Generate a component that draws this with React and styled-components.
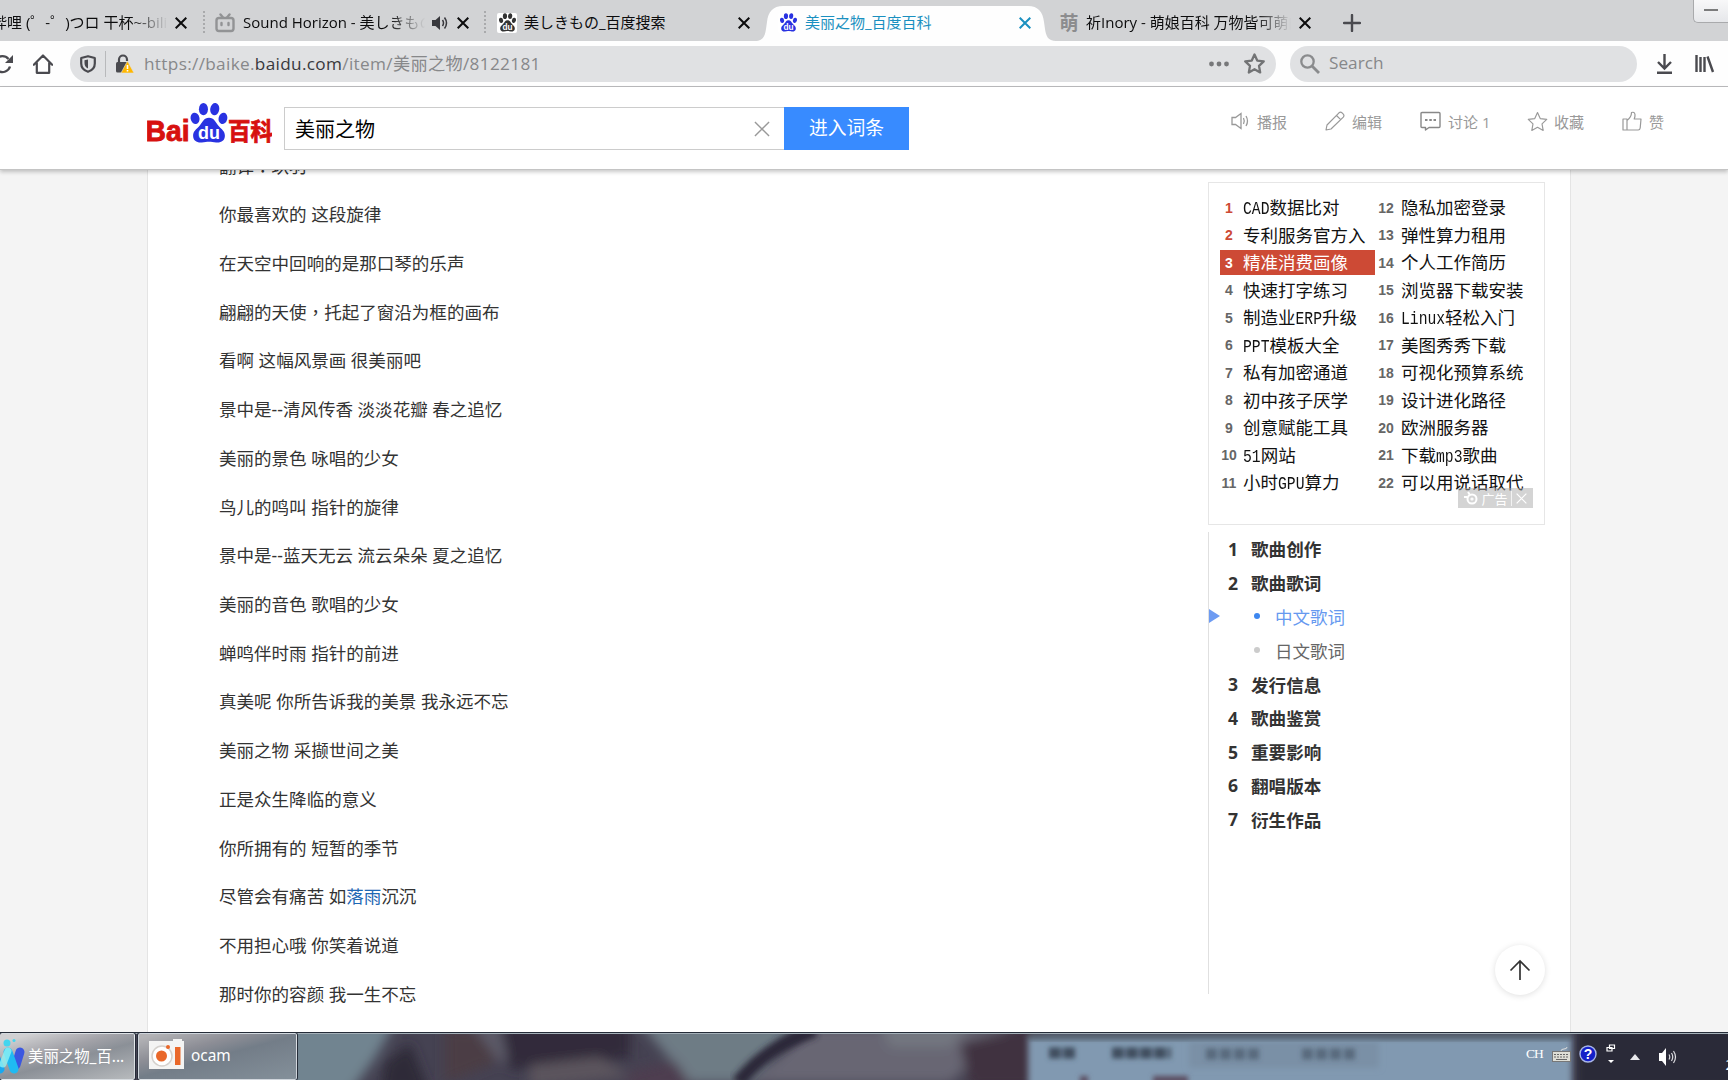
import React from 'react';
import styled, { createGlobalStyle } from 'styled-components';

const GlobalStyle = createGlobalStyle`
* {
box-sizing: border-box;
}
body {
margin: 0;
background: #fff;
font-family: "Open Sans", "Noto Sans CJK SC", sans-serif;
overflow: hidden;
}
`

const Screen = styled.div`
width: 1728px;
height: 1080px;
display: flex;
flex-direction: column;
overflow: hidden;
`

// browser chrome
const TabStrip = styled.div`
display: flex;
flex: none;
height: 41px;
background: #d2d3d5;
`
const Tab = styled.div`
position: relative;
display: flex;
align-items: center;
flex: none;
width: ${props => props.$w}px;
height: 41px;
padding: 4px ${props => props.$right}px 0 ${props => props.$left}px;
color: ${props => props.$active ? '#1a90c0' : '#0c0c0d'};
`
const TabShape = styled.svg`
position: absolute;
left: 0;
top: 6px;
`
const Favicon = styled.span`
position: relative;
display: flex;
align-items: center;
justify-content: center;
flex: none;
width: 20px;
height: 20px;
margin-right: ${props => props.$gap || 7}px;
border-radius: 2px;
background: ${props => props.$plain ? 'none' : '#fff'};
color: #8c8c8e;
font-size: 19px;
font-weight: bold;
line-height: 20px;
`
const TabTitle = styled.span`
position: relative;
flex: 1;
min-width: 0;
margin-top: -2px;
overflow: hidden;
white-space: pre;
font-family: "Open Sans", "Noto Sans CJK JP", sans-serif;
font-size: 15px;
line-height: 24px;
text-indent: ${props => props.$indent || 0}px;
${props => props.$fade && `
mask-image: linear-gradient(to right, #000 calc(100% - 36px), transparent);
`}
`
const Divider = styled.span`
flex: none;
width: 0;
height: 22px;
margin-top: 11px;
border-left: 2px dotted #a9aaac;
margin-right: -2px;
`
const NewTab = styled.div`
display: flex;
align-items: center;
flex: 1;
padding: 5px 0 0 23px;
`
const MinimizeButton = styled.div`
display: flex;
align-items: center;
justify-content: center;
width: 35px;
height: 23px;
border: 1px solid #a9aaac;
border-top: none;
border-right: none;
border-radius: 0 0 0 5px;
background: linear-gradient(#f8f8f9, #e6e7ea);
`
const Toolbar = styled.div`
display: flex;
align-items: center;
flex: none;
height: 46px;
background: #fefefe;
border-bottom: 1px solid #bcbcbe;
`
const NavIcons = styled.div`
display: flex;
align-items: center;
width: 70px;
overflow: hidden;
`
const Field = styled.div`
display: flex;
align-items: center;
width: ${props => props.$w}px;
height: 36px;
margin-right: ${props => props.$gap}px;
padding: 0 11px 0 10px;
border-radius: 18px;
background: #e0e1e3;
`
const FieldLine = styled.span`
width: 1px;
height: 26px;
margin: 0 9px;
background: #b8b9bb;
`
const Address = styled.span`
flex: 1;
margin: -2px 0 0 9px;
color: #87888a;
font-size: 17.2px;
letter-spacing: ${props => props.$spacing || 0}px;
white-space: nowrap;
`
const Domain = styled.span`
color: #38383d;
`

// page header
const Header = styled.header`
position: relative;
z-index: 2;
display: flex;
flex: none;
height: 83px;
padding-left: 147px;
background: #fff;
border-bottom: 1px solid #c4c4c4;
box-shadow: 0 2px 4px rgba(0, 0, 0, 0.22);
`
const Logo = styled.svg`
flex: none;
width: 125px;
height: 42px;
margin: 15px 12px 0 0;
`
const SearchInput = styled.div`
display: flex;
align-items: center;
justify-content: space-between;
width: 500px;
height: 43px;
margin-top: 20px;
padding: 0 14px 0 10px;
border: 1px solid #ccc;
border-right: none;
color: #000;
font-size: 20px;
`
const SearchButton = styled.button`
width: 125px;
height: 43px;
margin-top: 20px;
padding: 0 0 4px;
border: none;
background: #388bff;
color: #fff;
font-family: inherit;
font-size: 18.8px;
`
const Actions = styled.div`
display: flex;
margin: 20px 0 0 321px;
height: 28px;
`
const Action = styled.div`
display: flex;
align-items: center;
width: ${props => props.$w}px;
color: #999;
font-size: 15px;
white-space: nowrap;

svg {
flex: none;
margin-right: ${props => props.$gap}px;
}
`

// article
const Page = styled.main`
display: flex;
flex: 1;
min-height: 0;
padding-left: 147px;
background: #f4f4f4;
overflow: hidden;
`
const Sheet = styled.div`
display: flex;
width: 1424px;
background: #fff;
border-left: 1px solid #e4e4e4;
border-right: 1px solid #e4e4e4;
`
const Lyrics = styled.div`
width: 1060px;
margin-top: -28.5px;
padding-left: 71px;
`
const Line = styled.p`
margin: 0;
height: 48.72px;
color: #333;
font-family: "Noto Sans", "Noto Sans CJK SC", sans-serif;
font-size: 17.55px;
line-height: 48.72px;
white-space: nowrap;
`
// traditional glyphs keep the mark in the middle of its cell
const Mark = styled.span`
font-family: "Noto Sans CJK TC", sans-serif;
line-height: 1;
`
const TextLink = styled.a`
color: #1f68b4;
`
const Side = styled.aside`
position: relative;
width: 338px;
padding-top: 12px;
`
const AdBox = styled.div`
position: relative;
display: flex;
width: 337px;
height: 343px;
padding: 12px 0 0 11px;
border: 1px solid #e6e6e6;
`
const AdColumn = styled.div`
width: ${props => props.$w}px;
`
const AdRow = styled.div`
display: flex;
align-items: center;
height: 25px;
margin-bottom: 2.5px;
background: ${props => props.$hot ? '#cd4a35' : 'none'};
color: ${props => props.$hot ? '#fff' : '#111'};
font-family: "Noto Sans CJK SC", sans-serif;
font-size: 17.5px;
white-space: nowrap;
`
const AdNumber = styled.b`
width: ${props => props.$w}px;
margin-right: ${props => props.$gap}px;
color: ${props => props.$color};
font-family: "Liberation Sans", sans-serif;
font-size: 14px;
text-align: center;
`
const AdTitle = styled.span`
margin-top: -2px;
`
const Latin = styled.span`
display: inline-block;
font-family: "Liberation Mono", monospace;
font-size: 14.7px;
line-height: 17px;
transform: scaleY(1.22);
transform-origin: 50% 75%;
`
const AdBadge = styled.div`
position: absolute;
right: 11px;
bottom: 16px;
display: flex;
align-items: center;
justify-content: space-around;
width: 75px;
height: 20px;
padding: 0 4px;
background: rgba(170, 170, 170, 0.5);
color: #fff;
font-size: 13px;
`
const BadgeLine = styled.span`
width: 1px;
height: 15px;
background: rgba(255, 255, 255, 0.7);
`
const Catalog = styled.div`
height: 462px;
margin-top: 8px;
border-left: 1px solid #e0e0e0;
`
const Chapter = styled.div`
display: flex;
align-items: center;
height: 33.8px;
margin-top: ${props => props.$shift || 0}px;
color: #333;
font-family: "Noto Sans", "Noto Sans CJK SC", sans-serif;
font-size: 17.6px;
font-weight: bold;
`
const ChapterNumber = styled.span`
width: 42px;
padding-left: 19px;
`
const SubChapter = styled.div`
display: flex;
align-items: center;
height: 33.8px;
color: ${props => props.$active ? '#6699f0' : '#666'};
font-family: "Noto Sans CJK SC", sans-serif;
font-size: 17.5px;

&::before {
content: '';
width: 0;
height: 0;
border: 7px solid transparent;
border-left: 11px solid ${props => props.$active ? '#6d9bf2' : 'transparent'};
border-right: none;
}
`
const Bullet = styled.i`
width: 6px;
height: 6px;
margin: 0 15px 0 34px;
border-radius: 50%;
background: ${props => props.$active ? '#3d87f0' : '#ccc'};
`
const BackToTop = styled.div`
position: absolute;
left: 287px;
bottom: 37px;
display: flex;
align-items: center;
justify-content: center;
width: 50px;
height: 50px;
border-radius: 50%;
background: #fff;
box-shadow: 0 1px 6px rgba(0, 0, 0, 0.13);
`

// desktop taskbar
const Taskbar = styled.footer`
position: relative;
display: flex;
flex: none;
height: 48px;
border-top: 1px solid #252c38;
background: #3b3a4a;
overflow: hidden;
`
const Wallpaper = styled.svg`
position: absolute;
left: 0;
top: 0;
`
const TaskButton = styled.div`
position: relative;
display: flex;
align-items: center;
flex: none;
width: ${props => props.$w}px;
height: 47px;
margin-right: 3px;
padding-left: ${props => props.$left}px;
border: 1px solid rgba(235, 240, 245, 0.75);
border-left-width: ${props => props.$first ? 0 : 1}px;
border-radius: 2px;
outline: 1px solid #252c38;
background: ${props => props.$first
    ? 'linear-gradient(165deg, #d0d0d2 10%, #a2a2a8 38%, #8b9097 55%, #b7babd)'
    : 'linear-gradient(165deg, #b3b3b6 5%, #8d8e96 32%, #737d88 50%, #84909a)'};
color: #fff;
font-family: "Noto Sans", "Noto Sans CJK SC", sans-serif;
font-size: 15.4px;
white-space: nowrap;

svg {
flex: none;
}
`
const TaskLabel = styled.span`
margin-top: -3px;
`
const Tray = styled.div`
position: relative;
display: flex;
align-items: center;
margin-left: auto;
width: 202px;
color: #fff;
`
const Lang = styled.span`
width: 26px;
margin-top: -5px;
font-family: "Liberation Serif", serif;
font-size: 13.5px;
letter-spacing: -1px;
`
const Clock = styled.span`
margin: 14px -6px 0 auto;
font-size: 15px;
`

const CloseIcon = ({ color = '#0c0c0d', size = 12, width = 2 }) => (
    <svg width={size} height={size} viewBox="0 0 12 12" style={{ position: 'relative', flex: 'none' }}>
        <path d="M.7 .7 11.3 11.3M11.3 .7.7 11.3" stroke={color} strokeWidth={width * 12 / size} fill="none" />
    </svg>
);

const Paw = ({ color, size = 18 }) => (
    <svg width={size} height={size + 2} viewBox="0 0 36 39">
        <g fill={color}>
            <ellipse cx="4.4" cy="15" rx="4.3" ry="5.600" transform="rotate(-12 4.4 15)" />
            <ellipse cx="12.600" cy="6" rx="4.400" ry="6" />
            <ellipse cx="23.600" cy="6" rx="4.400" ry="6" transform="rotate(8 23.6 6)" />
            <ellipse cx="31.600" cy="15" rx="4.200" ry="5.600" transform="rotate(14 31.6 15)" />
            <path d="M18 14.500c5 0 6.500 4.500 9 7.500 3.500 4 6.500 5.500 6.500 10 0 5-4 7-8.500 6.500-3-.3-4.500-.8-7-.8s-4 .5-7 .8C6.500 39 2.500 37 2.500 32c0-4.500 3-6 6.500-10C11.500 19 13 14.500 18 14.500z" />
        </g>
        <text x="18" y="35" textAnchor="middle" fontFamily="Liberation Sans" fontWeight="bold" fontSize="17.500" fill="#fff">du</text>
    </svg>
);

const Star = ({ size, color, width }) => (
    <svg width={size} height={size} viewBox="0 0 20 20">
        <path d="M10 1.500 12.600 7.200 18.800 8 14.300 12.300 15.400 18.500 10 15.500 4.600 18.500 5.700 12.300 1.200 8 7.400 7.200z" fill="none" stroke={color} strokeWidth={width} strokeLinejoin="round" />
    </svg>
);

const lyrics = [
    <>翻译<Mark>：</Mark>玖羽</>,
    '你最喜欢的 这段旋律',
    '在天空中回响的是那口琴的乐声',
    <>翩翩的天使<Mark>，</Mark>托起了窗沿为框的画布</>,
    '看啊 这幅风景画 很美丽吧',
    '景中是--清风传香 淡淡花瓣 春之追忆',
    '美丽的景色 咏唱的少女',
    '鸟儿的鸣叫 指针的旋律',
    '景中是--蓝天无云 流云朵朵 夏之追忆',
    '美丽的音色 歌唱的少女',
    '蝉鸣伴时雨 指针的前进',
    '真美呢 你所告诉我的美景 我永远不忘',
    '美丽之物 采撷世间之美',
    '正是众生降临的意义',
    '你所拥有的 短暂的季节',
    <>尽管会有痛苦 如<TextLink>落雨</TextLink>沉沉</>,
    '不用担心哦 你笑着说道',
    '那时你的容颜 我一生不忘',
];

const adsLeft = ['CAD数据比对', '专利服务官方入', '精准消费画像', '快速打字练习', '制造业ERP升级', 'PPT模板大全', '私有加密通道', '初中孩子厌学', '创意赋能工具', '51网站', '小时GPU算力'];
const adsRight = ['隐私加密登录', '弹性算力租用', '个人工作简历', '浏览器下载安装', 'Linux轻松入门', '美图秀秀下载', '可视化预算系统', '设计进化路径', '欧洲服务器', '下载mp3歌曲', '可以用说话取代'];

// latin runs are set half as wide as the chinese characters
const AdText = ({ text }) => (
    <AdTitle>
        {text.split(/([A-Za-z0-9]+)/).map((part, i) => (i % 2 ? <Latin key={i}>{part}</Latin> : part))}
    </AdTitle>
);

const numberColor = n => {
    if (n === 3) return '#fff';
    return n < 3 ? '#cd4a35' : '#666';
};

const Tabs = () => (
    <TabStrip>
        <Tab $w={203} $left={0} $right={16}>
            <TabTitle $fade $indent={-8}>哔哩 (゜-゜)つロ 干杯~-bili</TabTitle>
            <span style={{ width: 7 }} />
            <CloseIcon />
        </Tab>
        <Divider />
        <Tab $w={281} $left={12} $right={15}>
            <Favicon $plain $gap={8}>
                <svg width="20" height="20" viewBox="0 0 20 20" fill="none" stroke="#929395" strokeWidth="2.400" strokeLinecap="round">
                    <rect x="1.500" y="5" width="17" height="13" rx="2.500" />
                    <path d="M5.500 1.500 8 4.500M14.500 1.500 12 4.500M6.500 10v2M13.500 10v2" />
                </svg>
            </Favicon>
            <TabTitle $fade>Sound Horizon - 美しきもの</TabTitle>
            <svg width="17" height="16" viewBox="0 0 17 16" style={{ margin: '0 8px 0 7px', flex: 'none' }}>
                <path d="M0 5h3.500L8 1v14l-4.500-4H0z" fill="#38383d" />
                <path d="M10.500 5q2 3 0 6M12.500 2.500q4 5.500 0 11" fill="none" stroke="#38383d" strokeWidth="1.500" />
            </svg>
            <CloseIcon />
        </Tab>
        <Divider />
        <Tab $w={271} $left={13} $right={5}>
            <Favicon><Paw color="#333" size={17} /></Favicon>
            <TabTitle>美しきもの_百度搜索</TabTitle>
            <CloseIcon />
        </Tab>
        <Tab $active $w={301} $left={23} $right={25}>
            <TabShape width="301" height="35" viewBox="0 0 301 35">
                <path d="M0 35C8 35 10 30 11 23L12 16C13 6 18 0 28 0H273C283 0 288 6 289 16L290 23C291 30 293 35 301 35z" fill="#fefefe" />
            </TabShape>
            <Favicon><Paw color="#2932e1" size={17} /></Favicon>
            <TabTitle>美丽之物_百度百科</TabTitle>
            <CloseIcon color="#1a90c0" />
        </Tab>
        <Tab $w={264} $left={3} $right={9}>
            <Favicon $plain>萌</Favicon>
            <TabTitle $fade>祈Inory - 萌娘百科 万物皆可萌的</TabTitle>
            <span style={{ width: 8 }} />
            <CloseIcon />
        </Tab>
        <NewTab>
            <svg width="18" height="18" viewBox="0 0 18 18">
                <path d="M9 1v16M1 9h16" stroke="#4a4a4f" strokeWidth="2.400" strokeLinecap="round" />
            </svg>
        </NewTab>
        <MinimizeButton>
            <svg width="14" height="4"><path d="M0 1h14" stroke="#555" strokeWidth="1.500" /></svg>
        </MinimizeButton>
    </TabStrip>
);

const NavBar = () => (
    <Toolbar>
        <NavIcons>
            <svg width="22" height="22" viewBox="0 0 22 22" style={{ marginLeft: -9, marginRight: 20 }}>
                <path d="M19 13.500a8 8 0 1 1-1.500-7.500" fill="none" stroke="#4a4a4f" strokeWidth="2.300" />
                <path d="M22 2v8h-8z" fill="#4a4a4f" />
            </svg>
            <svg width="20" height="20" viewBox="0 0 20 20">
                <path d="M.8 10.800 10 1.500l9.200 9.300M3.800 9v9.800h12.400V9" fill="none" stroke="#4a4a4f" strokeWidth="2.200" strokeLinejoin="round" strokeLinecap="round" />
            </svg>
        </NavIcons>
        <Field $w={1206} $gap={14}>
            <svg width="16" height="18" viewBox="0 0 16 18">
                <path d="M8 1.200 14.800 3v5.500c0 4-3 7-6.800 8.300C4.200 15.500 1.200 12.500 1.200 8.500V3z" fill="none" stroke="#4a4a4f" strokeWidth="2.200" strokeLinejoin="round" />
                <path d="M8 4.500v9C5.500 12.200 4.500 10.500 4.500 8V5.300z" fill="#4a4a4f" />
            </svg>
            <FieldLine />
            <svg width="20" height="20" viewBox="0 0 20 20" style={{ flex: 'none' }}>
                <path d="M4 9V5.500a4 4 0 0 1 8 0V7" fill="none" stroke="#4a4a4f" strokeWidth="2.200" />
                <rect x="1" y="8" width="12.500" height="10.500" rx="1.500" fill="#4a4a4f" />
                <path d="M12.500 7 19 19H6z" fill="#ffb700" stroke="#e0e1e3" strokeWidth=".6" strokeLinejoin="round" />
                <path d="M12.500 11v4M12.500 16v1.500" stroke="#fff" strokeWidth="1.600" />
            </svg>
            <Address $spacing={0.33}>https://baike.<Domain>baidu.com</Domain>/item/美丽之物/8122181</Address>
            <svg width="20" height="6" viewBox="0 0 20 6" fill="#77787a" style={{ marginRight: 15 }}>
                <circle cx="2.500" cy="3" r="2.400" /><circle cx="10" cy="3" r="2.400" /><circle cx="17.500" cy="3" r="2.400" />
            </svg>
            <Star size={21} color="#727375" width={2.2} />
        </Field>
        <Field $w={347} $gap={19}>
            <svg width="20" height="20" viewBox="0 0 20 20" fill="none" stroke="#8a8b8d" strokeWidth="2.300">
                <circle cx="7.500" cy="7.500" r="6.200" /><path d="M12 12 19 19" strokeWidth="2.800" />
            </svg>
            <Address>Search</Address>
        </Field>
        <svg width="17" height="20" viewBox="0 0 17 20" style={{ marginRight: 22 }}>
            <path d="M8.500 0v14M2 8l6.500 6.500L15 8M1 18.800h15" fill="none" stroke="#4a4a4f" strokeWidth="2.400" />
        </svg>
        <svg width="20" height="19" viewBox="0 0 20 19">
            <path d="M1.500 1v17M5.500 3v15M9.500 3v15M12.500 2.500 18 18" fill="none" stroke="#4a4a4f" strokeWidth="2.400" />
        </svg>
    </Toolbar>
);

const PageHeader = () => (
    <Header>
        <Logo viewBox="0 0 125 42">
            <text x="-1.500" y="38.500" fontFamily="Liberation Sans" fontWeight="bold" fontSize="29" fill="#d7110f" stroke="#d7110f" strokeWidth=".9" textLength="44" lengthAdjust="spacingAndGlyphs">Bai</text>
            <g transform="translate(43 1)"><Paw color="#2932e1" size={38} /></g>
            <text x="81" y="38" fontFamily="Noto Sans CJK SC" fontWeight="bold" fontSize="23.500" fill="#d7110f" stroke="#d7110f" strokeWidth=".8" textLength="45" lengthAdjust="spacingAndGlyphs">百科</text>
        </Logo>
        <SearchInput>
            美丽之物
            <CloseIcon color="#999" size={16} width={1.4} />
        </SearchInput>
        <SearchButton>进入词条</SearchButton>
        <Actions>
            <Action $w={95} $gap={7}>
                <svg width="20" height="20" viewBox="0 0 20 20" fill="none" stroke="#999" strokeWidth="1.300">
                    <path d="M2 6.500h3.500L11 2.500v15L5.500 13.500H2zM13.500 7q1.500 3 0 6M16 5q3 5 0 10" />
                </svg>
                播报
            </Action>
            <Action $w={95} $gap={7}>
                <svg width="20" height="20" viewBox="0 0 20 20" fill="none" stroke="#999" strokeWidth="1.200" strokeLinejoin="round">
                    <path d="M1 19 2 14 14 1.800q1.500-1.300 3 0l1.300 1.300q1.300 1.500 0 3L6 18zM11.500 4.500l4.200 4.200" />
                </svg>
                编辑
            </Action>
            <Action $w={107} $gap={7}>
                <svg width="21" height="20" viewBox="0 0 21 20" fill="none" stroke="#888" strokeWidth="1.400" strokeLinejoin="round">
                    <path d="M2 1.500h17q1 0 1 1v13q0 1-1 1H9L5.500 19v-2.500H2q-1 0-1-1v-13q0-1 1-1z" />
                    <path d="M5 9h2.500M9.300 9h2.500M13.500 9H16" strokeWidth="2.200" />
                </svg>
                讨论 1
            </Action>
            <Action $w={95} $gap={6}>
                <Star size={21} color="#999" width={1.1} />
                收藏
            </Action>
            <Action $w={60} $gap={7}>
                <svg width="20" height="20" viewBox="0 0 20 20" fill="none" stroke="#999" strokeWidth="1.200" strokeLinejoin="round">
                    <path d="M1 8h4v11H1zM5 9.500Q9.500 6 9.500 1.500q3-1 3.500 2 .2 2-.8 4.500H19l-.8 9q-.3 2-2 2H5" />
                </svg>
                赞
            </Action>
        </Actions>
    </Header>
);

const Sidebar = () => (
    <Side>
        <AdBox>
            <AdColumn $w={155}>
                {adsLeft.map((text, i) => (
                    <AdRow key={text} $hot={i === 2}>
                        <AdNumber $w={18} $gap={5} $color={numberColor(i + 1)}>{i + 1}</AdNumber>
                        <AdText text={text} />
                    </AdRow>
                ))}
            </AdColumn>
            <AdColumn $w={160}>
                {adsRight.map((text, i) => (
                    <AdRow key={text}>
                        <AdNumber $w={22} $gap={4} $color="#666">{i + 12}</AdNumber>
                        <AdText text={text} />
                    </AdRow>
                ))}
            </AdColumn>
            <AdBadge>
                <svg width="14" height="14" viewBox="0 0 14 14" fill="none" stroke="#fff" strokeWidth="2">
                    <circle cx="8" cy="8" r="4.500" /><circle cx="8" cy="8" r=".6" /><path d="M0 6h3M4 1l2 3" />
                </svg>
                广告
                <BadgeLine />
                <CloseIcon color="#fff" size={11} width={1.2} />
            </AdBadge>
        </AdBox>
        <Catalog>
            <Chapter $shift={-1}><ChapterNumber>1</ChapterNumber>歌曲创作</Chapter>
            <Chapter><ChapterNumber>2</ChapterNumber>歌曲歌词</Chapter>
            <SubChapter $active><Bullet $active />中文歌词</SubChapter>
            <SubChapter><Bullet />日文歌词</SubChapter>
            {['发行信息', '歌曲鉴赏', '重要影响', '翻唱版本', '衍生作品'].map((title, i) => (
                <Chapter key={title}><ChapterNumber>{i + 3}</ChapterNumber>{title}</Chapter>
            ))}
        </Catalog>
        <BackToTop>
            <svg width="22" height="22" viewBox="0 0 22 22">
                <path d="M11 21V2M1.500 11.500 11 2l9.500 9.500" fill="none" stroke="#333" strokeWidth="1.700" />
            </svg>
        </BackToTop>
    </Side>
);

const Desktop = () => (
    <Wallpaper width="1728" height="48" viewBox="0 0 1728 48">
        <defs>
            <filter id="soft" x="-10%" y="-50%" width="120%" height="200%"><feGaussianBlur stdDeviation="6" /></filter>
            <filter id="haze" x="-10%" y="-50%" width="120%" height="200%"><feGaussianBlur stdDeviation="3" /></filter>
            <filter id="smudge" filterUnits="userSpaceOnUse" x="1030" y="0" width="400" height="48"><feGaussianBlur stdDeviation="2.5" /></filter>
        </defs>
        <rect width="1728" height="48" fill="#454252" />
        <g filter="url(#soft)">
            <path d="M270-10h125l-20 35-25 35h-80z" fill="#718490" />
            <path d="M385 30l25-20 20 50h-50z" fill="#2e2937" />
            <path d="M445-5l50 5 0 30-50 20z" fill="#4b3d44" />
            <path d="M470-10l40 0 20 25-30 15z" fill="#5b5a68" />
            <path d="M500-10h130v35l-120 12z" fill="#302c3b" />
            <path d="M530 32l70-8 30 20-100 10z" fill="#5c555d" />
            <path d="M640-10h160l-50 60H690z" fill="#6e7c85" />
            <path d="M630 38l45-10 20 30h-70z" fill="#4e3d50" />
            <path d="M810-5h200l-60 55H750z" fill="#676673" />
            <path d="M880-10h90l-20 24h-60z" fill="#737780" />
            <path d="M960 10l80-20v65h-70z" fill="#40313f" />
        </g>
        <path d="M738 50Q765 15 815-3" fill="none" stroke="#2b2738" strokeWidth="14" filter="url(#haze)" />
        <path d="M1028 4h544v54h-544z" fill="#8199b1" filter="url(#haze)" />
        <path d="M1189 8h190v27h-190z" fill="#7a90a6" filter="url(#haze)" />
        <path d="M1028 1h544v5h-544z" fill="#54646f" filter="url(#haze)" />
        <g filter="url(#smudge)" fill="none" stroke="#3f4e5f" strokeWidth="11">
            <path d="M1049 20h27M1112 20h59" strokeDasharray="12 2" />
            <path d="M1206 21h56M1302 21h55" strokeDasharray="11 3" opacity=".6" />
            <path d="M1080 47h8M1153 47h35" stroke="#5c4d60" strokeWidth="8" />
        </g>
        <path d="M1577-6h160v60h-160z" fill="#2b2b38" filter="url(#haze)" />
        <path d="M0 .5h1728" stroke="#a4b0b8" />
    </Wallpaper>
);

const App = () => {
    return (
        <Screen>
            <GlobalStyle />
            <Tabs />
            <NavBar />
            <PageHeader />
            <Page>
                <Sheet>
                    <Lyrics>
                        {lyrics.map((text, i) => <Line key={i}>{text}</Line>)}
                    </Lyrics>
                    <Sidebar />
                </Sheet>
            </Page>
            <Taskbar>
                <Desktop />
                <TaskButton $first $w={135} $left={0}>
                    <svg width="28" height="36" viewBox="0 0 28 36">
                        <path d="M-6 14 0 30" stroke="#18a8f0" strokeWidth="9" strokeLinecap="round" />
                        <path d="M20 13 16 26" stroke="#3b57e0" strokeWidth="9" strokeLinecap="round" />
                        <path d="M8 13 14 30" stroke="#20baf2" strokeWidth="9" strokeLinecap="round" />
                        <path d="M8 12 3 25" stroke="#8ff3f4" strokeWidth="7" strokeLinecap="round" opacity=".8" />
                        <circle cx="7" cy="4" r="3.500" fill="#45d5ee" /><circle cx="14" cy="1.500" r="1.500" fill="#45d5ee" />
                    </svg>
                    <TaskLabel>美丽之物_百...</TaskLabel>
                </TaskButton>
                <TaskButton $w={159} $left={10}>
                    <svg width="36" height="32" viewBox="0 0 36 32" style={{ marginRight: 6, marginTop: -3 }}>
                        <path d="M0 2h24V0h9v2h2v28H0z" fill="#f4f4f3" />
                        <circle cx="13" cy="17" r="10" fill="#fff" stroke="#d4d0cc" strokeWidth="1.500" />
                        <circle cx="12.500" cy="17" r="5.500" fill="#e9682a" />
                        <circle cx="19" cy="8" r="2" fill="#e9682a" />
                        <path d="M26 8h5.500v18H26z" fill="#e9682a" />
                    </svg>
                    <TaskLabel>ocam</TaskLabel>
                </TaskButton>
                <Tray>
                    <Lang>CH</Lang>
                    <svg width="19" height="16" viewBox="0 0 19 16" style={{ margin: '-3px 8px 0 0' }}>
                        <path d="M9 4q0-2 3-2t3-2" fill="none" stroke="#ddd" />
                        <rect x=".5" y="4.500" width="18" height="10" fill="#deded6" stroke="#777" />
                        <path d="M2 7.500h15M2 10h15" stroke="#666" strokeDasharray="2 1" /><path d="M4 12.500h11" stroke="#666" />
                    </svg>
                    <svg width="18" height="18" viewBox="0 0 18 18" style={{ marginTop: -6 }}>
                        <circle cx="9" cy="9" r="8" fill="#1420c8" stroke="#a9b6e8" strokeWidth="1.400" />
                        <text x="9" y="14" textAnchor="middle" fontFamily="Liberation Sans" fontWeight="bold" fontSize="14" fill="#fff">?</text>
                    </svg>
                    <svg width="10" height="20" viewBox="0 0 10 20" style={{ margin: '-6px 14px 0 9px' }}>
                        <path d="M3.500 1h5v3.500h-5zM1 3.500h5V7H1z" fill="#2b2b38" stroke="#fff" strokeWidth="1.200" />
                        <path d="M2 16h6l-3 3z" fill="#fff" />
                    </svg>
                    <svg width="10" height="6" viewBox="0 0 10 6"><path d="M0 6 5 0l5 6z" fill="#e8e8ec" /></svg>
                    <svg width="19" height="20" viewBox="0 0 19 20" style={{ marginLeft: 18 }}>
                        <path d="M1 6h3l4-5v18l-4-5H1z" fill="#fff" />
                        <path d="M11 7.500q1.500 2.500 0 5M13.500 6q2.500 4 0 8M15.500 4q4 6 0 12" fill="none" stroke="#dcdce0" strokeWidth="1.200" />
                    </svg>
                    <Clock>2</Clock>
                </Tray>
            </Taskbar>
        </Screen>
    );
};

export default App;
